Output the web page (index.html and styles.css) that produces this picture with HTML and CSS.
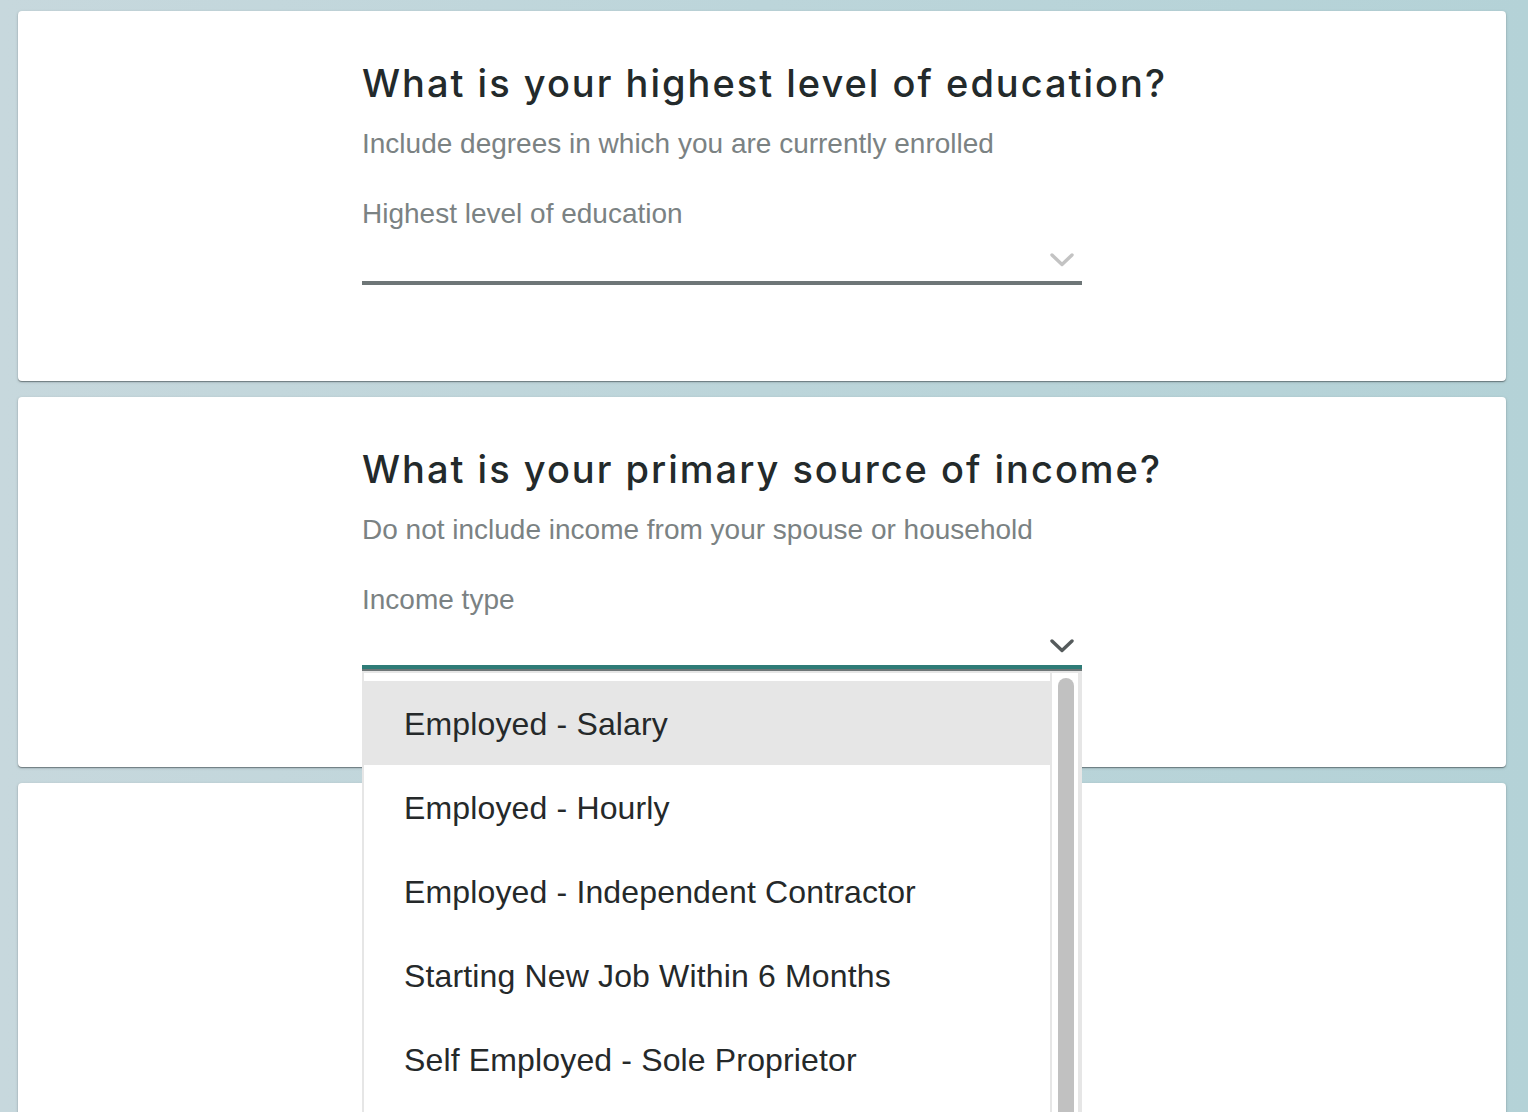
FILE: index.html
```html
<!DOCTYPE html>
<html lang="en">
<head>
<meta charset="utf-8">
<title>Questionnaire</title>
<link rel="stylesheet" href="styles.css">
</head>
<body>
<main class="page">
  <section class="card">
    <div class="question">
      <h2 class="question__title">What is your highest level of education?</h2>
      <p class="question__hint">Include degrees in which you are currently enrolled</p>
      <div class="field__label">Highest level of education</div>
      <div class="field">
        <svg class="field__chevron field__chevron--muted" viewBox="0 0 24 14" width="24" height="14"><path d="M2 2 L12 11.5 L22 2" fill="none" stroke="currentColor" stroke-width="3.4" stroke-linecap="round" stroke-linejoin="round"/></svg>
      </div>
    </div>
  </section>

  <section class="card card--open">
    <div class="question">
      <h2 class="question__title">What is your primary source of income?</h2>
      <p class="question__hint">Do not include income from your spouse or household</p>
      <div class="field__label">Income type</div>
      <div class="field field--focused">
        <svg class="field__chevron" viewBox="0 0 24 14" width="24" height="14"><path d="M2 2 L12 11.5 L22 2" fill="none" stroke="currentColor" stroke-width="3.4" stroke-linecap="round" stroke-linejoin="round"/></svg>
        <div class="menu">
          <ul class="menu__list">
            <li class="menu__item menu__item--active">Employed - Salary</li>
            <li class="menu__item">Employed - Hourly</li>
            <li class="menu__item">Employed - Independent Contractor</li>
            <li class="menu__item">Starting New Job Within 6 Months</li>
            <li class="menu__item">Self Employed - Sole Proprietor</li>
          </ul>
          <div class="menu__scroll"><div class="menu__thumb"></div></div>
        </div>
      </div>
    </div>
  </section>

  <section class="card"></section>
</main>
</body>
</html>
```

FILE: styles.css
```css
html, body {
  margin: 0;
  height: 1112px;
  overflow: hidden;
}

body {
  background: linear-gradient(to right, #c7d8dd 0%, #bcd5da 50%, #b4d2d7 100%);
  font-family: "Liberation Sans", Arial, sans-serif;
}

.page {
  padding: 11px 22px 0 18px;
}

.card {
  box-sizing: border-box;
  height: 370px;
  margin-bottom: 16px;
  background: #ffffff;
  border-radius: 4px;
  box-shadow: 0 1px 1px rgba(60, 70, 72, 0.55), 0 1px 3px rgba(60, 70, 72, 0.25);
  padding: 50px 0 0 344px;
}

.card--open {
  position: relative;
  z-index: 2;
}

.question {
  width: 720px;
}

.question__title {
  margin: 0;
  font-family: Inter, "Noto Sans", sans-serif;
  font-weight: 500;
  font-size: 38px;
  line-height: 44px;
  letter-spacing: 2px;
  color: #232a2b;
  white-space: nowrap;
}

.question__hint {
  margin: 24px 0 0;
  font-size: 28px;
  line-height: 30px;
  color: #7b8283;
}

.field__label {
  margin-top: 40px;
  font-size: 28px;
  line-height: 30px;
  color: #7b8283;
}

.field {
  position: relative;
  height: 52px;
  border-bottom: 4px solid #6e7677;
}

.field--focused {
  height: 54px;
  border-bottom-width: 2px;
  box-shadow: inset 0 -4px 0 #2e7c77;
}

.field__chevron {
  position: absolute;
  right: 8px;
  top: 24px;
  color: #555b5c;
}

.field__chevron--muted {
  color: #c3c3c3;
}

.menu {
  position: absolute;
  left: 0;
  top: calc(100% + 2px);
  width: 720px;
  height: 700px;
  box-sizing: border-box;
  display: flex;
  background: #ffffff;
  border-top: 2px solid #e6e6e6;
  border-left: 2px solid #e6e6e6;
  border-right: 4px solid #e6e6e6;
}

.menu__list {
  flex: 1;
  margin: 0;
  padding: 8px 0 0;
  list-style: none;
}

.menu__item {
  box-sizing: border-box;
  height: 84px;
  display: flex;
  align-items: center;
  padding: 2px 0 0 40px;
  font-size: 32px;
  letter-spacing: 0.15px;
  color: #25292a;
}

.menu__item--active {
  background: #e6e6e6;
}

.menu__scroll {
  width: 28px;
  box-sizing: border-box;
  border-left: 2px solid #e6e6e6;
  padding: 5px 4px 0 6px;
}

.menu__thumb {
  height: 640px;
  background: #c1c1c1;
  border-radius: 8px 8px 0 0;
}
```
